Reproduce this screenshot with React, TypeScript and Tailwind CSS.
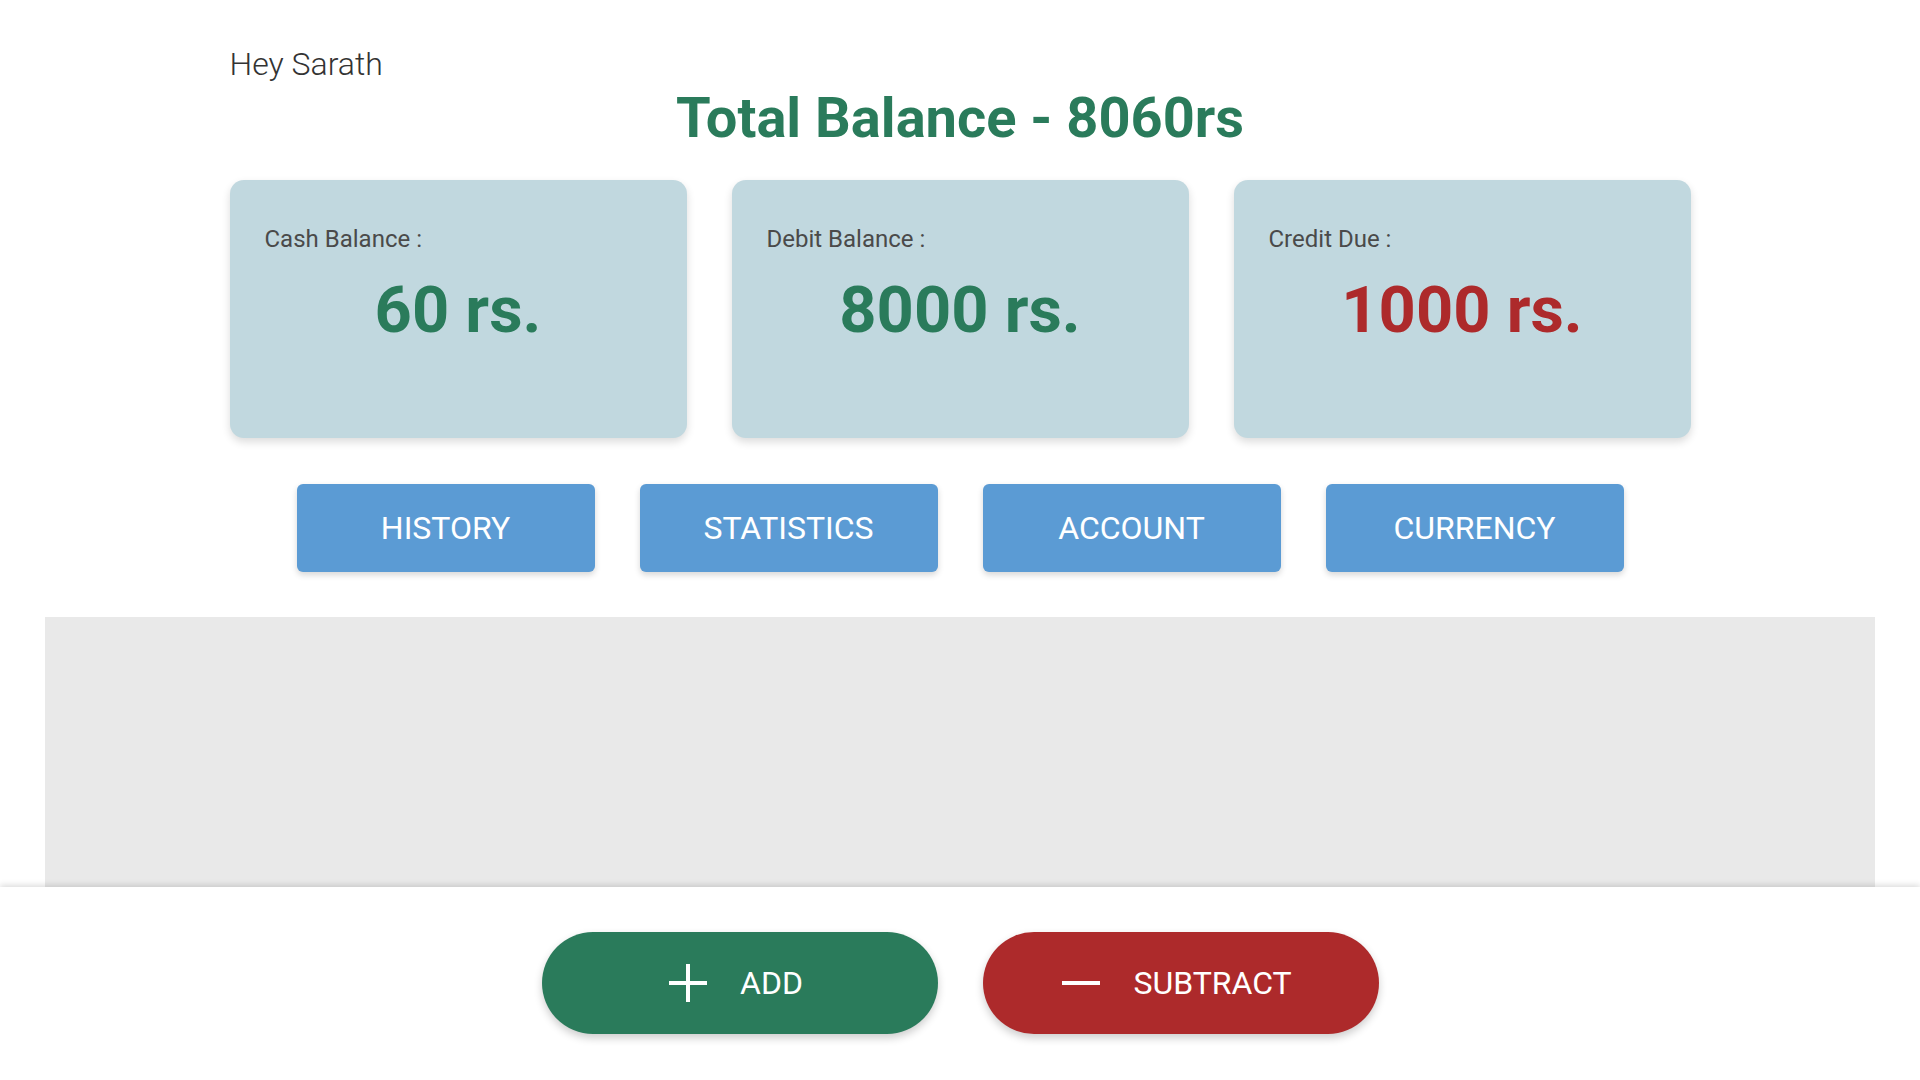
import React from "react";

interface Balance {
  label: string;
  amount: string;
  tone: "green" | "red";
}

const balances: Balance[] = [
  { label: "Cash Balance :", amount: "60 rs.", tone: "green" },
  { label: "Debit Balance :", amount: "8000 rs.", tone: "green" },
  { label: "Credit Due :", amount: "1000 rs.", tone: "red" },
];

const menu = ["HISTORY", "STATISTICS", "ACCOUNT", "CURRENCY"];

const PlusIcon = () => (
  <svg width="44" height="44" viewBox="0 0 44 44" fill="none">
    <path d="M22 3v38M3 22h38" stroke="white" strokeWidth="4" />
  </svg>
);

const MinusIcon = () => (
  <svg width="44" height="44" viewBox="0 0 44 44" fill="none">
    <path d="M3 22h38" stroke="white" strokeWidth="4" />
  </svg>
);

const App = () => {
  return (
    <div className="h-screen flex flex-col bg-white font-['Roboto','Liberation_Sans',sans-serif] overflow-hidden">
      <div className="flex-1 flex flex-col min-h-0">
        <div className="w-[1461px] mx-auto pt-[45px]">
          <p className="text-[32px] leading-[38px] font-light text-[#333333]">
            Hey Sarath
          </p>
        </div>

        <h1 className="mt-[2px] text-center text-[56px] leading-[66px] font-bold text-[#2a7b5b]">
          Total Balance - 8060rs
        </h1>

        <div className="w-[1461px] mx-auto mt-[29px] grid grid-cols-3 gap-[45px]">
          {balances.map((b, i) => (
            <div
              key={i}
              className="h-[258px] rounded-[14px] bg-[#c1d8df] px-[35px] pt-[45px] shadow-[0_4px_8px_rgba(0,0,0,0.14)]"
            >
              <p className="text-[24px] leading-[28px] text-[#4a4a4a]">
                {b.label}
              </p>
              <p
                className={
                  b.tone === "green"
                    ? "mt-[19px] text-center text-[65px] leading-[76px] font-bold text-[#2a7b5b]"
                    : "mt-[19px] text-center text-[65px] leading-[76px] font-bold text-[#ad2a2b]"
                }
              >
                {b.amount}
              </p>
            </div>
          ))}
        </div>

        <div className="mt-[46px] flex justify-center gap-[45px]">
          {menu.map((m) => (
            <button
              key={m}
              className="w-[298px] h-[88px] rounded-[6px] bg-[#5b9bd4] text-white text-[32px] shadow-[0_3px_6px_rgba(0,0,0,0.16)]"
            >
              {m}
            </button>
          ))}
        </div>

        <div className="mx-[45px] mt-[45px] flex-1 bg-[#e9e9e9]" />
      </div>

      <div className="relative z-10 h-[193px] shrink-0 bg-white shadow-[0_-2px_6px_rgba(0,0,0,0.14)] flex items-center justify-center gap-[45px] pb-[2px]">
        <button className="w-[396px] h-[102px] rounded-full bg-[#2a7b5b] text-white flex items-center justify-center gap-[30px] pr-[10px] shadow-[0_4px_8px_rgba(0,0,0,0.2)]">
          <PlusIcon />
          <span className="text-[32px] leading-none">ADD</span>
        </button>
        <button className="w-[396px] h-[102px] rounded-full bg-[#ad2a2b] text-white flex items-center justify-center gap-[30px] pr-[10px] shadow-[0_4px_8px_rgba(0,0,0,0.2)]">
          <MinusIcon />
          <span className="text-[32px] leading-none">SUBTRACT</span>
        </button>
      </div>
    </div>
  );
};

export default App;
